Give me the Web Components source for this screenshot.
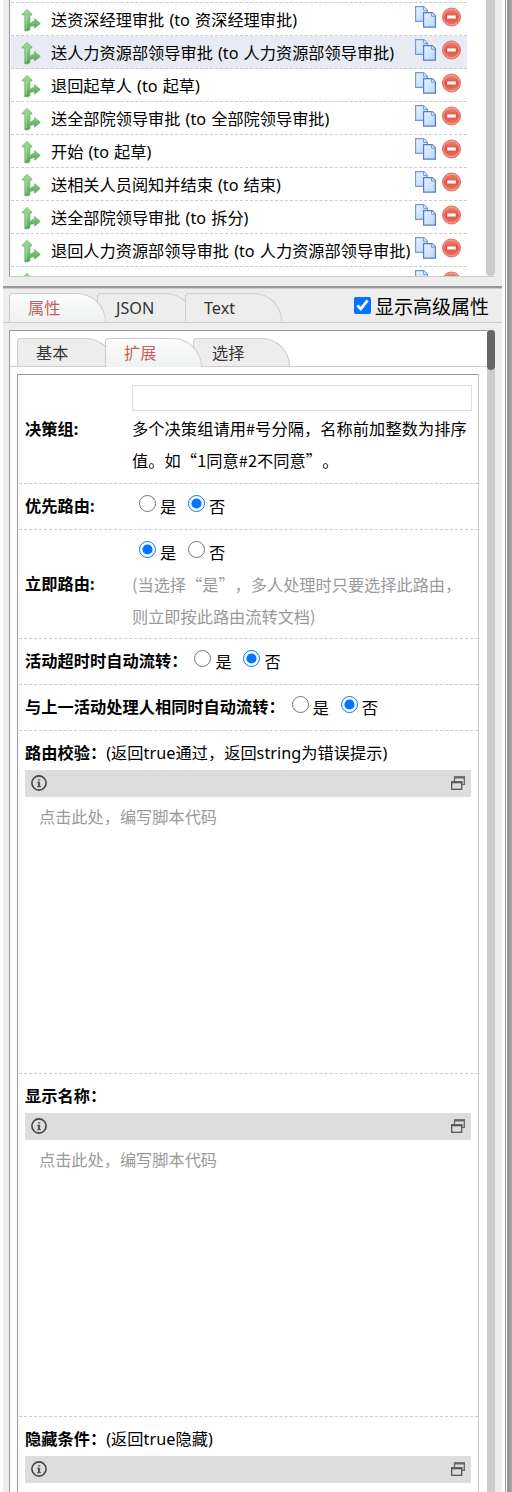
<!DOCTYPE html>
<html lang="zh-CN">
<head>
<meta charset="utf-8">
<title>流程属性</title>
<style>
html,body{margin:0;padding:0;background:#fff}
body{width:512px;height:1492px;overflow:hidden;font:16.2px/32px "Noto Sans","Noto Sans CJK SC",sans-serif;color:#000;text-spacing-trim:space-all}
</style>
</head>
<body>
<flow-designer></flow-designer>
<script>
const define = (name, html) => {
  const t = document.createElement('template');
  t.innerHTML = html;
  customElements.define(name, class extends HTMLElement {
    constructor() {
      super();
      this.attachShadow({mode: 'open'}).appendChild(t.content.cloneNode(true));
    }
    connectedCallback() {
      const on = this.getAttribute('value');
      if (on) this.shadowRoot.querySelectorAll('input').forEach(i => { i.checked = i.value === on; });
    }
  });
};

define('route-row', `
<style>
:host{display:grid;grid-template-columns:40px 1fr 26px 26px;height:32px;width:456px;border-bottom:1px dashed #ccc;white-space:nowrap}
:host([active]){background:#e8ebf4}
.arrow{margin:5px 0 0 10px}
.label{line-height:32px;padding-top:1px;height:31px;word-spacing:.9px}
.copy{margin:3px 0 0 0}
.del{margin:4px 0 0 1px}
svg{display:block}
</style>
<svg class="arrow" width="22" height="24" viewBox="0 0 22 24">
<defs><linearGradient id="g" x1="0" y1="0" x2="0" y2="1"><stop offset="0" stop-color="#a0dc98"/><stop offset=".5" stop-color="#7cc67c"/><stop offset="1" stop-color="#4f9f55"/></linearGradient></defs>
<path d="M6 1.3 L11 6.2 V7 H8.9 V16.2 Q10.3 13.4 13.6 13.2 V10.6 L19.3 15.4 L13.6 20.2 V17.8 Q9.4 17.4 8.9 19.6 V21.4 L7.6 22.8 H3.8 V7 H1.2 V6.2 Z" fill="url(#g)" stroke="#62ae61" stroke-width=".7"/>
<path d="M5.2 7 V21" stroke="#b9e4b2" stroke-width="1.1" opacity=".7"/>
</svg>
<span class="label"><slot></slot></span>
<svg class="copy" width="22" height="22" viewBox="0 0 22 22">
<defs><linearGradient id="p" x1="0" y1="0" x2="1" y2="1"><stop offset="0" stop-color="#e9f3ff"/><stop offset="1" stop-color="#b7d8f9"/></linearGradient></defs>
<path d="M.6.6H8.8L12.4 4.2V15.4H.6Z" fill="url(#p)" stroke="#7599d6" stroke-width="1.2"/>
<path d="M8.6.8V4.4H12.2" fill="#e5f1ff" stroke="#7599d6"/>
<path d="M8.6 6.6H17.2L20.4 9.8V21.2H8.6Z" fill="url(#p)" stroke="#547cc5" stroke-width="1.2"/>
<path d="M16.6 6.8V10.2H20.2" fill="#e5f1ff" stroke="#6c94d8"/>
</svg>
<svg class="del" width="20" height="21" viewBox="0 0 20 21">
<defs><linearGradient id="r" x1="0" y1="0" x2="0" y2="1"><stop offset="0" stop-color="#ed8c7c"/><stop offset=".5" stop-color="#e54f40"/><stop offset="1" stop-color="#ee796a"/></linearGradient></defs>
<circle cx="9.5" cy="10" r="9" fill="url(#r)" stroke="#d97468"/>
<circle cx="9.5" cy="10" r="7.8" fill="none" stroke="#f6b5a9" stroke-width=".7"/>
<rect x="5" y="8.3" width="9" height="3.4" rx=".5" fill="#fff" stroke="#db6658" stroke-width=".4"/>
</svg>`);

define('route-list', `
<style>
:host{display:flex;height:277px;box-sizing:border-box;margin-left:6px;border-left:1px solid #999;border-bottom:1px solid #ccc;background:#fff;width:486px;overflow:hidden}
.rows{width:476px;padding:2px 0 0 1px;box-sizing:border-box}
.top{width:456px;border-bottom:1px dashed #ccc}
.bar{width:9px;background:#ccc;height:276px;border-radius:0 0 4px 4px;flex:none}
</style>
<div class="rows"><div class="top"></div><slot></slot></div><div class="bar"></div>`);

define('tab-item', `
<style>
:host{display:block;flex:none;box-sizing:border-box;width:97px;height:28px;margin-right:-9px;padding-left:18px;border:1px solid #ccc;border-bottom:0;border-radius:4px 30px 0 0/4px 30px 0 0;background:#ededed;color:#333;line-height:28px;position:relative}
:host([selected]){z-index:1;height:29px;background:linear-gradient(#fbfcfc,#eff2f2);color:#c5605d}
</style><slot></slot>`);

define('tab-bar', `
<style>
:host{display:flex;align-items:flex-start;box-sizing:border-box;border-bottom:1px solid #ccc}
.end{margin-left:auto}
</style><slot></slot><div class="end"><slot name="end"></slot></div>`);

define('advanced-toggle', `
<style>
:host{display:flex;font-size:19px;line-height:29px;margin-right:13px}
input{width:17px;height:17px;margin:4px 4px 0 0}
</style><input type="checkbox" checked><span><slot></slot></span>`);

define('yes-no', `
<style>
:host{display:inline-flex;height:32px;line-height:32px;vertical-align:top}
label{display:flex;width:49px}
input{width:17px;height:17px;margin:5px 4px 0 0}
</style>
<label><input type="radio" name="v" value="yes"><span>是</span></label><label><input type="radio" name="w" value="no"><span>否</span></label>`);

define('field-row', `
<style>
:host{display:grid;grid-template-columns:107px 1fr;align-items:center;box-sizing:border-box;padding:6px 0 7px 6px;border-bottom:1px dashed #ccc;margin-left:1px}
:host([inline]){display:flex}
b{white-space:nowrap;letter-spacing:.05px}
.c{font-family:"Noto Sans CJK SC","Noto Sans",sans-serif}
</style><b><slot name="label"></slot></b><div class="c"><slot></slot></div>`);

define('text-box', `
<style>
:host{display:block;width:340px;height:26px;box-sizing:border-box;border:1px solid #ddd;margin:3px 0 1px;background:#fff}
</style>`);

define('script-field', `
<style>
:host{display:block;box-sizing:border-box;height:343px;margin-left:1px;padding:6px 7px 0 6px;border-bottom:1px dashed #ccc}
:host([collapsed]) .ph{display:none}
.t{height:33px;line-height:33px;white-space:nowrap;letter-spacing:.05px}
.bar{display:flex;justify-content:space-between;align-items:center;height:27px;background:#ddd;padding:0 6px;box-sizing:border-box}
.ph{color:#999;padding:4px 0 0 14px;line-height:32px}
svg{display:block}
.bar svg{margin-top:-1px}
</style>
<div class="t"><b><slot name="label"></slot></b><slot></slot></div>
<div class="bar">
<svg width="16" height="16" viewBox="0 0 16 16"><circle cx="8" cy="8" r="7.1" fill="none" stroke="#444" stroke-width="1.6"/><path d="M8 6.8V11.6" stroke="#555" stroke-width="2.2"/><path d="M6.3 7.3H8M6.2 11.6H9.8M7 4.8H9.2" fill="none" stroke="#555" stroke-width="1.3"/></svg>
<svg width="14" height="14" viewBox="0 0 14 14"><path d="M3.5 5V.8H13.3V8.3H10.8" fill="none" stroke="#666" stroke-width="1.3"/><path d="M3 1.5H14" stroke="#666" stroke-width="2"/><rect x=".7" y="6" width="10" height="7.3" fill="#ddd" stroke="#555" stroke-width="1.3"/><path d="M0 6.3H11.4" stroke="#555" stroke-width="2"/></svg>
</div>
<div class="ph">点击此处，编写脚本代码</div>`);

define('property-panel', `
<style>
:host{display:flex;width:486px;height:1162px;margin:7px 0 0 6px;box-sizing:border-box;border-left:1px solid #999;background:#fff;overflow:hidden}
.body{width:477px;border-top:1px solid #999;box-sizing:border-box;flex:none}
tab-bar{height:36px;padding:7px 0 0 7px;margin-left:0}
.box{width:462px;height:1130px;margin:7px 0 0 7px;box-sizing:border-box;border:1px solid #ccc;border-left-color:#999;border-top-color:#999;border-bottom:0}
.bar{width:8px;background:#ccc;flex:none}
.thumb{height:40px;border-radius:4px;background:#666}
.g{color:#999}
.first{height:109px;align-items:center}
.hint{letter-spacing:.1px;white-space:nowrap}
.third{height:109px;padding-bottom:6px}
</style>
<div class="body">
<tab-bar><tab-item>基本</tab-item><tab-item selected>扩展</tab-item><tab-item>选择</tab-item></tab-bar>
<div class="box">
<field-row class="first"><span slot="label">决策组:</span><text-box></text-box><div class="hint">多个决策组请用#号分隔，名称前加整数为排序<br>值。如“1同意#2不同意”。</div></field-row>
<field-row><span slot="label">优先路由:</span><yes-no value="no" style="margin-left:7px"></yes-no></field-row>
<field-row class="third"><span slot="label">立即路由:</span><yes-no value="yes" style="margin-left:7px"></yes-no><div class="g">(当选择“是”，多人处理时只要选择此路由，<br>则立即按此路由流转文档)</div></field-row>
<field-row inline><span slot="label">活动超时时自动流转：</span><yes-no value="no" style="margin-left:7px"></yes-no></field-row>
<field-row inline><span slot="label">与上一活动处理人相同时自动流转：</span><yes-no value="no" style="margin-left:7px"></yes-no></field-row>
<script-field><span slot="label">路由校验：</span>(返回true通过，返回string为错误提示)</script-field>
<script-field><span slot="label">显示名称：</span></script-field>
<script-field collapsed><span slot="label">隐藏条件：</span>(返回true隐藏)</script-field>
</div>
</div>
<div class="bar"><div class="thumb"></div></div>`);

define('flow-designer', `
<style>
:host{display:flex;width:512px;height:1492px;overflow:hidden;background:#fff}
main{width:499px;margin-left:3px;height:1492px;background:#ededed;flex:none}
.split{height:2px;margin-top:9px;background:#999;border-bottom:1px solid #ccc}
.tabs{height:34px;padding:4px 0 0 6px}
.edge{margin-left:3px;width:1px;background:#999}
.shade{margin-left:1px;flex:1;background:linear-gradient(90deg,#8f8f8f,#a8a8a8)}
</style>
<main>
<route-list>
<route-row>送资深经理审批 (to 资深经理审批)</route-row>
<route-row active>送人力资源部领导审批 (to 人力资源部领导审批)</route-row>
<route-row>退回起草人 (to 起草)</route-row>
<route-row>送全部院领导审批 (to 全部院领导审批)</route-row>
<route-row>开始 (to 起草)</route-row>
<route-row>送相关人员阅知并结束 (to 结束)</route-row>
<route-row>送全部院领导审批 (to 拆分)</route-row>
<route-row>退回人力资源部领导审批 (to 人力资源部领导审批)</route-row>
<route-row></route-row>
</route-list>
<div class="split"></div>
<tab-bar class="tabs"><tab-item selected>属性</tab-item><tab-item>JSON</tab-item><tab-item>Text</tab-item><advanced-toggle slot="end">显示高级属性</advanced-toggle></tab-bar>
<property-panel></property-panel>
</main>
<div class="edge"></div><div class="shade"></div>`);
</script>
</body>
</html>
